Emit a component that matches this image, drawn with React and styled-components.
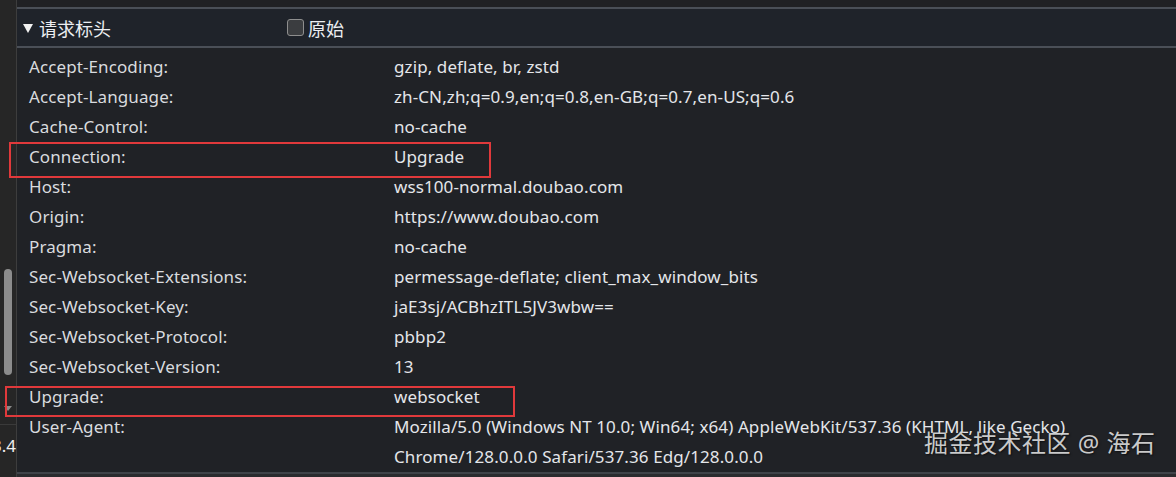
import styled, { createGlobalStyle } from 'styled-components'

const GlobalStyle = createGlobalStyle`
  html, body {
    margin: 0;
    padding: 0;
    background: #202124;
    overflow: hidden;
  }
  * {
    box-sizing: border-box;
  }
`

const headers = [
  ['Accept-Encoding:', 'gzip, deflate, br, zstd'],
  ['Accept-Language:', 'zh-CN,zh;q=0.9,en;q=0.8,en-GB;q=0.7,en-US;q=0.6'],
  ['Cache-Control:', 'no-cache'],
  ['Connection:', 'Upgrade'],
  ['Host:', 'wss100-normal.doubao.com'],
  ['Origin:', 'https://www.doubao.com'],
  ['Pragma:', 'no-cache'],
  ['Sec-Websocket-Extensions:', 'permessage-deflate; client_max_window_bits'],
  ['Sec-Websocket-Key:', 'jaE3sj/ACBhzITL5JV3wbw=='],
  ['Sec-Websocket-Protocol:', 'pbbp2'],
  ['Sec-Websocket-Version:', '13'],
  ['Upgrade:', 'websocket'],
  [
    'User-Agent:',
    'Mozilla/5.0 (Windows NT 10.0; Win64; x64) AppleWebKit/537.36 (KHTML, like Gecko)',
    'Chrome/128.0.0.0 Safari/537.36 Edg/128.0.0.0',
  ],
]

const Frame = styled.div`
  position: relative;
  display: flex;
  width: 1176px;
  height: 477px;
  overflow: hidden;
  background: #202226;
  font-family: 'Noto Sans', 'Noto Sans CJK SC', sans-serif;
  color: #dfe1e5;
`

const LeftRail = styled.div`
  width: 17px;
  flex: none;
  display: flex;
  flex-direction: column;
  background: #262626;
  border-right: 1px solid #3d3d3d;
`

const ScrollTrack = styled.div`
  height: 425px;
  flex: none;
  display: flex;
  flex-direction: column;
  align-items: center;
  padding-top: 269px;
  padding-right: 1px;
  border-bottom: 1px solid #3a3a3a;
`

const ScrollThumb = styled.div`
  width: 8px;
  height: 106px;
  border-radius: 4px;
  background: #8c8c8c;
`

const ScrollArrow = styled.div`
  margin-top: 31px;
  width: 0;
  height: 0;
  border-left: 4px solid transparent;
  border-right: 4px solid transparent;
  border-top: 5px solid #8a8a8a;
`

const RailLabel = styled.div`
  display: flex;
  justify-content: flex-end;
  overflow: hidden;
  padding-top: 10px;
  font-size: 17px;
  line-height: 22px;
  color: #f0f0f0;
  white-space: nowrap;
`

const Main = styled.div`
  flex: 1;
  display: flex;
  flex-direction: column;
  min-width: 0;
`

const TopStrip = styled.div`
  height: 9px;
  flex: none;
  background: #202124;
  border-bottom: 2px solid #4a4f57;
`

const SectionHeader = styled.div`
  height: 39px;
  flex: none;
  display: flex;
  align-items: center;
  padding-left: 6px;
  background: #1f232a;
  border-bottom: 2px solid #4a4f57;
  font-size: 18px;
`

const Toggle = styled.div`
  width: 264px;
  display: flex;
  align-items: center;
  gap: 3px;
  color: #eceef1;
`

const Triangle = styled.span`
  width: 0;
  height: 0;
  border-left: 5px solid transparent;
  border-right: 5px solid transparent;
  border-top: 9px solid #f2f2f2;
  margin-right: 3px;
  margin-top: 1px;
`

const RawOption = styled.label`
  display: flex;
  align-items: center;
  gap: 4px;
  color: #eceef1;
`

const Checkbox = styled.span`
  width: 17px;
  height: 17px;
  border: 1.5px solid #8e8e8e;
  border-radius: 3px;
  background: #3b3d40;
`

const Rows = styled.div`
  flex: 1;
  padding-top: 4px;
  border-bottom: 2px solid #3f4349;
`

const Row = styled.div`
  display: grid;
  grid-template-columns: 365px 1fr;
  padding-left: 12px;
  font-size: 17px;
  letter-spacing: 0.1px;
  line-height: 30px;
  white-space: nowrap;
`

const Key = styled.div`
  color: #d9dbdf;
`

const Value = styled.div`
  color: #e4e6ea;
`

const Highlight = styled.div`
  position: absolute;
  border: 2px solid #e0393b;
  pointer-events: none;
`

const Watermark = styled.div`
  position: absolute;
  left: 924px;
  top: 426px;
  font-size: 24px;
  line-height: 34px;
  letter-spacing: 0.5px;
  color: rgba(228, 228, 228, 0.88);
  text-shadow: 1px 1px 2px rgba(0, 0, 0, 0.6);
  white-space: nowrap;
`

const BottomStrip = styled.div`
  height: 4px;
  flex: none;
  background: #2a2b2e;
`

const App = () => (
  <>
    <GlobalStyle />
    <Frame>
      <LeftRail>
        <ScrollTrack>
          <ScrollThumb />
          <ScrollArrow />
        </ScrollTrack>
        <RailLabel>3.4</RailLabel>
      </LeftRail>
      <Main>
        <TopStrip />
        <SectionHeader>
          <Toggle>
            <Triangle />
            请求标头
          </Toggle>
          <RawOption>
            <Checkbox />
            原始
          </RawOption>
        </SectionHeader>
        <Rows>
          {headers.map(([key, value, extra]) => (
            <div key={key}>
              <Row>
                <Key>{key}</Key>
                <Value>{value}</Value>
              </Row>
              {extra && (
                <Row>
                  <Key />
                  <Value>{extra}</Value>
                </Row>
              )}
            </div>
          ))}
        </Rows>
        <BottomStrip />
      </Main>
      <Highlight style={{ left: 9, top: 142, width: 482, height: 36 }} />
      <Highlight style={{ left: 5, top: 386, width: 510, height: 31 }} />
      <Watermark>掘金技术社区 @ 海石</Watermark>
    </Frame>
  </>
)

export default App
